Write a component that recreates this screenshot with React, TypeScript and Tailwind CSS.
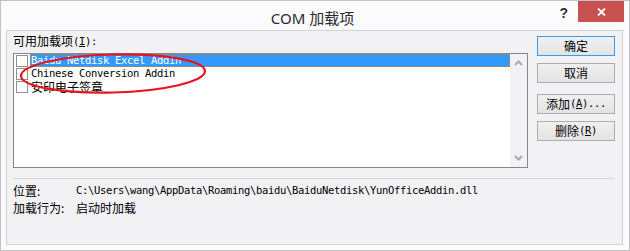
import React from "react";

const mono = "font-['DejaVu_Sans_Mono',monospace] text-[10.5px] tracking-[-0.32px]";
const cjk = "font-['Noto_Sans_CJK_SC',sans-serif] text-[12px]";

type Item = { label: React.ReactNode; selected?: boolean };

const items: Item[] = [
  { label: <span className={mono}>Baidu Netdisk Excel Addin</span>, selected: true },
  { label: <span className={mono}>Chinese Conversion Addin</span> },
  { label: <span className={cjk}>安印电子签章</span> },
];

function Chevron({ up }: { up?: boolean }) {
  return (
    <svg width="9" height="6" viewBox="0 0 9 6" className="block">
      <path
        d={up ? "M1 5 L4.5 1.5 L8 5" : "M1 1 L4.5 4.5 L8 1"}
        fill="none"
        stroke="#a9a9a9"
        strokeWidth="2"
      />
    </svg>
  );
}

function Button({ children, primary }: { children: React.ReactNode; primary?: boolean }) {
  return (
    <div
      className={`w-[78px] h-[20px] flex items-center justify-center border bg-gradient-to-b from-[#f0f0f0] to-[#e3e3e3] text-black ${
        primary ? "border-[#3c9be6]" : "border-[#adadad]"
      }`}
    >
      {children}
    </div>
  );
}

export default function App() {
  return (
    <div className="relative w-[630px] h-[251px] bg-[#fbfafd] border border-[#c2c2c2] flex flex-col text-black overflow-hidden">
      {/* 标题栏 */}
      <div className="h-[29px] flex">
        <div className="flex-1" />
        <div className="font-['Noto_Sans','Noto_Sans_CJK_SC',sans-serif] text-[15px] text-[#2a2a2a] leading-[34px]">
          COM 加载项
        </div>
        <div className="flex-1 flex justify-end items-start pr-[5px]">
          <span className="font-['Liberation_Sans',sans-serif] font-bold text-[14px] text-[#333] leading-[24px] mr-[10px]">
            ?
          </span>
          <div className="w-[46px] h-[21px] bg-[#c75050] flex items-center justify-center">
            <svg width="9" height="8" viewBox="0 0 9 8">
              <path d="M1 0.5 L8 7.5 M8 0.5 L1 7.5" stroke="white" strokeWidth="1.8" />
            </svg>
          </div>
        </div>
      </div>

      {/* 内容面板 */}
      <div className="ml-[5px] w-[617px] h-[215px] bg-[#f2f1f4] border border-[#d2d2d2] flex flex-col">
        <div className="flex">
          <div className="pl-[6px] pt-[2px]">
            <div className="h-[16px] leading-[16px] flex items-center">
              <span className={cjk}>可用加载项</span>
              <span className={mono}>
                (<span className="underline">I</span>):
              </span>
            </div>
            <div className="mt-[4px] w-[515px] h-[115px] border border-[#828790] bg-white flex">
              <div className="w-[496px] flex flex-col">
                {items.map((it, i) => (
                  <div key={i} className="h-[13px] flex items-center pl-[2px]">
                    <div className="w-[12px] h-[12px] border border-[#8f8f8f] bg-white shrink-0" />
                    <div
                      className={`ml-[2px] flex-1 h-[13px] flex items-center pl-[1px] leading-[13px] ${
                        it.selected ? "bg-[#3399ff] text-white outline-1 outline-dotted outline-[#e07a1f] -outline-offset-1" : ""
                      }`}
                    >
                      {it.label}
                    </div>
                  </div>
                ))}
              </div>
              <div className="w-[17px] bg-[#f2f1f4] flex flex-col items-center justify-between pt-[6px] pb-[6px]">
                <Chevron up />
                <Chevron />
              </div>
            </div>
          </div>

          <div className="ml-[9px] pt-[5px] flex flex-col">
            <Button primary>
              <span className={cjk}>确定</span>
            </Button>
            <div className="mt-[7px]">
              <Button>
                <span className={cjk}>取消</span>
              </Button>
            </div>
            <div className="mt-[11px]">
              <Button>
                <span className={cjk}>添加</span>
                <span className={mono}>
                  (<span className="underline">A</span>)...
                </span>
              </Button>
            </div>
            <div className="mt-[7px]">
              <Button>
                <span className={cjk}>删除</span>
                <span className={mono}>
                  (<span className="underline">R</span>)
                </span>
              </Button>
            </div>
          </div>
        </div>

        <div className="ml-[6px] mt-[10px] w-[602px] h-px bg-[#dadada]" />

        <div className="pl-[6px] mt-[3px]">
          <div className="h-[17px] flex items-center">
            <span className={`${cjk} w-[63px]`}>位置:</span>
            <span className={mono}>C:\Users\wang\AppData\Roaming\baidu\BaiduNetdisk\YunOfficeAddin.dll</span>
          </div>
          <div className="h-[17px] flex items-center">
            <span className={`${cjk} w-[63px]`}>加载行为:</span>
            <span className={cjk}>启动时加载</span>
          </div>
        </div>
      </div>

      {/* 红色标注圈 */}
      <svg
        className="absolute left-0 top-0 pointer-events-none"
        width="630"
        height="251"
        viewBox="0 0 630 251"
      >
        <ellipse
          cx="112"
          cy="72.5"
          rx="92"
          ry="19"
          fill="none"
          stroke="#e8141b"
          strokeWidth="2.2"
          transform="rotate(-1.5 112 72.5)"
        />
      </svg>
    </div>
  );
}
